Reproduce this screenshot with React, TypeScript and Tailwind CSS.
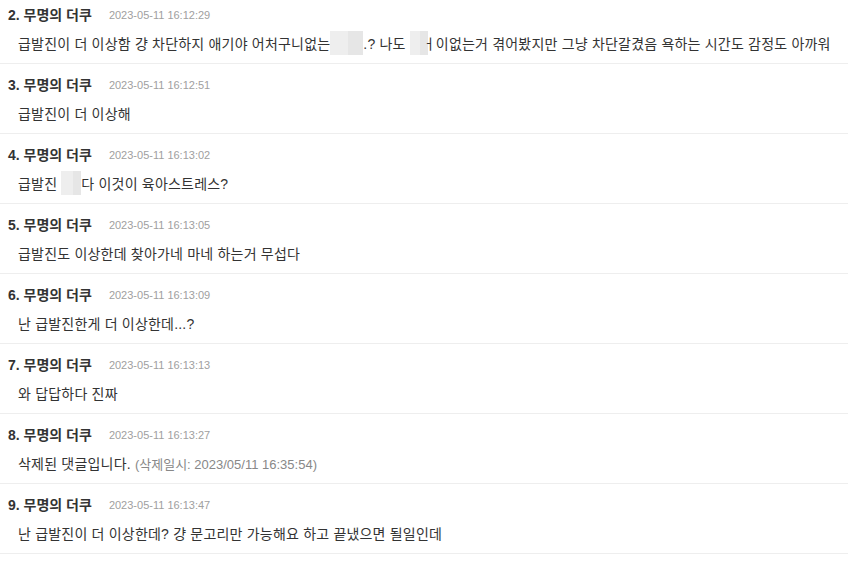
import React from 'react';

type Comment = {
  no: number;
  date: string;
  body: React.ReactNode;
};

function Blur({ a, b }: { a: number; b: number }) {
  return (
    <span className="inline-flex h-[24px] align-middle -mt-[4px]">
      <span className="bg-[#eeeeee]" style={{ width: a }} />
      <span className="bg-[#e6e6e6]" style={{ width: b }} />
    </span>
  );
}

const comments: Comment[] = [
  {
    no: 2,
    date: '2023-05-11 16:12:29',
    body: (
      <>
        급발진이 더 이상함 걍 차단하지 애기야 어처구니없는
        <Blur a={18} b={15} />
        .? 나도 <Blur a={10} b={8} />
        <span className="-ml-[5px]">ㅓ이없는거 겪어봤지만 그냥 차단갈겼음 욕하는 시간도 감정도 아까워</span>
      </>
    ),
  },
  { no: 3, date: '2023-05-11 16:12:51', body: '급발진이 더 이상해' },
  {
    no: 4,
    date: '2023-05-11 16:13:02',
    body: (
      <>
        급발진 <Blur a={12} b={8} />
        다 이것이 육아스트레스?
      </>
    ),
  },
  { no: 5, date: '2023-05-11 16:13:05', body: '급발진도 이상한데 찾아가네 마네 하는거 무섭다' },
  { no: 6, date: '2023-05-11 16:13:09', body: '난 급발진한게 더 이상한데...?' },
  { no: 7, date: '2023-05-11 16:13:13', body: '와 답답하다 진짜' },
  {
    no: 8,
    date: '2023-05-11 16:13:27',
    body: (
      <>
        삭제된 댓글입니다.{' '}
        <span className="text-[13px] tracking-normal text-[#888888]">(삭제일시: 2023/05/11 16:35:54)</span>
      </>
    ),
  },
  {
    no: 9,
    date: '2023-05-11 16:13:47',
    body: '난 급발진이 더 이상한데? 걍 문고리만 가능해요 하고 끝냈으면 될일인데',
  },
];

export default function App() {
  return (
    <div
      className="w-[848px] h-[563px] overflow-hidden bg-white text-[#333333]"
      style={{ fontFamily: '"Liberation Sans", "Noto Sans CJK KR", sans-serif' }}
    >
      <ul>
        {comments.map((c, i) => (
          <li
            key={c.no}
            className={
              i === 0
                ? 'border-b border-[#eeeeee] pt-[6px] pb-[9px]'
                : 'border-b border-[#eeeeee] pt-[12px] pb-[9px]'
            }
          >
            <div className="flex items-center h-[18px] pl-[8px]">
              <span className="text-[14px] font-bold">
                {c.no}. 무명의 더쿠
              </span>
              <span className="ml-[17px] text-[11px] text-[#a0a0a0]">{c.date}</span>
            </div>
            <div className="mt-[10px] h-[20px] pl-[18px] text-[14px] tracking-[0.2px] leading-[20px] whitespace-nowrap">
              {c.body}
            </div>
          </li>
        ))}
      </ul>
    </div>
  );
}
